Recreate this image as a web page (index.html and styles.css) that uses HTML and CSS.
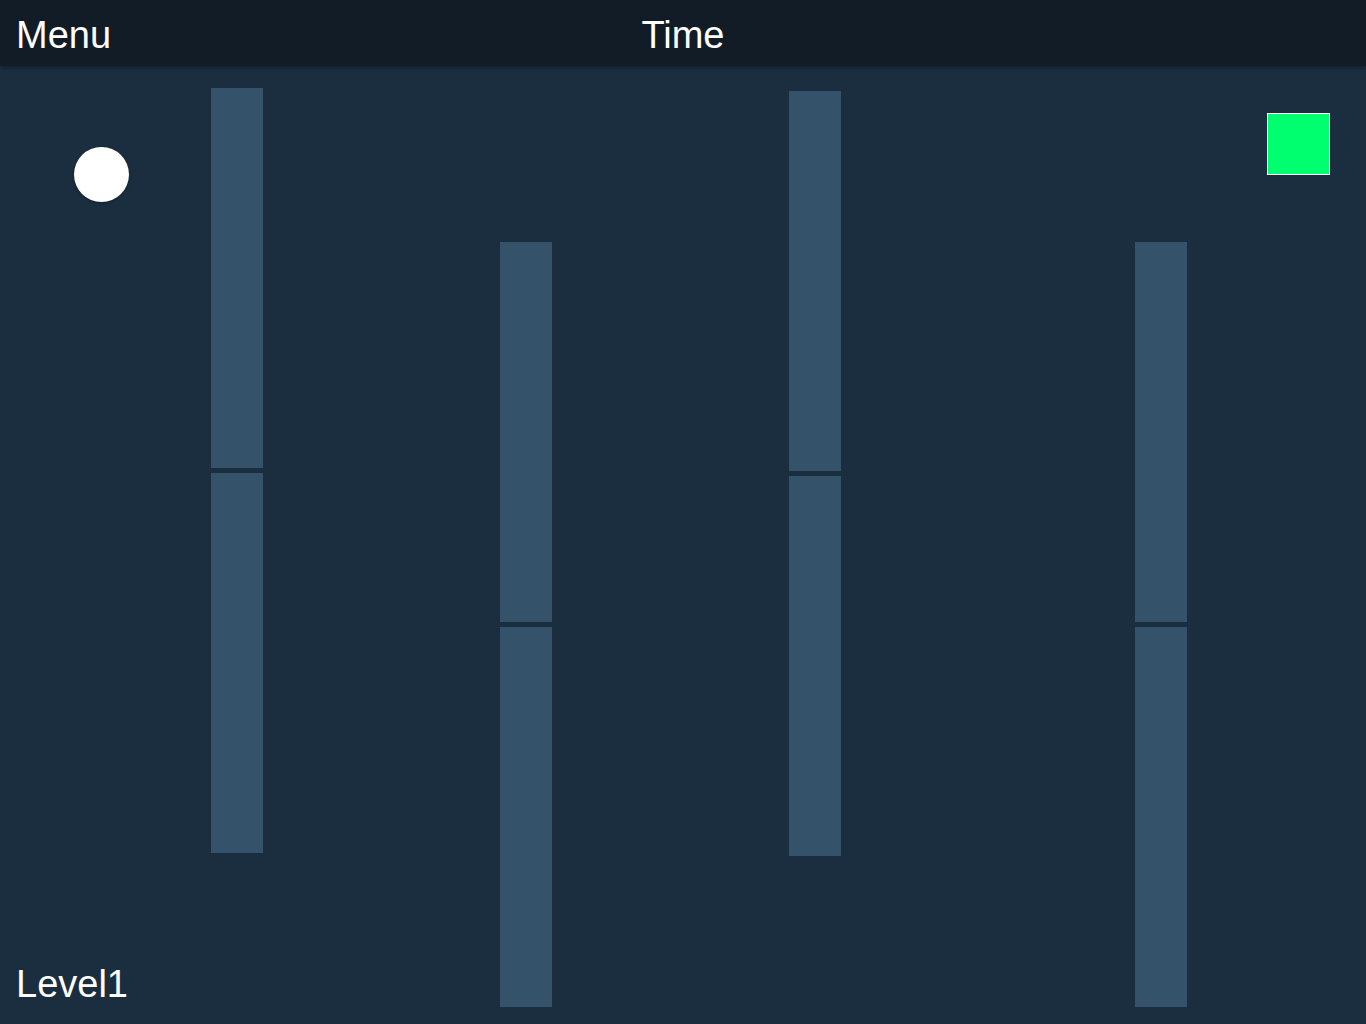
FILE: index.html
```html
<!DOCTYPE html>
<html>
<head>
<meta charset="utf-8">
<title>Game</title>
<link rel="stylesheet" href="styles.css">
</head>
<body>
<div class="app">
  <header class="topbar">
    <div class="menu">Menu</div>
    <div class="time">Time</div>
    <div class="spacer"></div>
  </header>
  <main class="field">
    <div class="ball"></div>
    <div class="goal"></div>
    <div class="wall w1"><div class="seg"></div><div class="seg"></div></div>
    <div class="wall w2"><div class="seg"></div><div class="seg"></div></div>
    <div class="wall w3"><div class="seg"></div><div class="seg"></div></div>
    <div class="wall w4"><div class="seg"></div><div class="seg"></div></div>
    <div class="level">Level1</div>
  </main>
</div>
</body>
</html>
```

FILE: styles.css
```css
html, body {
  margin: 0;
  padding: 0;
  width: 1366px;
  height: 1024px;
  overflow: hidden;
  background: #1b2e40;
  font-family: "Liberation Sans", Arial, sans-serif;
  color: #ffffff;
}
.app {
  display: flex;
  flex-direction: column;
  height: 1024px;
}
.topbar {
  height: 66px;
  flex: 0 0 66px;
  box-sizing: border-box;
  background: #111c27;
  display: grid;
  grid-template-columns: 1fr auto 1fr;
  align-items: center;
  padding: 3px 16px 0 16px;
  font-size: 38px;
  line-height: 44px;
  box-shadow: 0 2px 4px rgba(0, 0, 0, 0.3);
  position: relative;
  z-index: 2;
}
.menu { justify-self: start; }
.time { justify-self: center; }
.field {
  position: relative;
  flex: 1;
}
.ball {
  position: absolute;
  left: 74px;
  top: 81px;
  width: 55px;
  height: 55px;
  border-radius: 50%;
  background: #ffffff;
  box-shadow: 0 1px 3px rgba(0, 0, 0, 0.35);
}
.goal {
  position: absolute;
  left: 1267px;
  top: 47px;
  width: 61px;
  height: 60px;
  background: #00ff6e;
  border: 1px solid #ffffff;
}
.wall {
  position: absolute;
  width: 52px;
  display: flex;
  flex-direction: column;
  gap: 5px;
}
.seg {
  height: 380px;
  background: #34536a;
}
.w1 { left: 211px; top: 22px; }
.w2 { left: 500px; top: 176px; }
.w3 { left: 789px; top: 25px; }
.w4 { left: 1135px; top: 176px; }
.level {
  position: absolute;
  left: 16px;
  bottom: 18px;
  font-size: 38px;
  line-height: 44px;
}
```
